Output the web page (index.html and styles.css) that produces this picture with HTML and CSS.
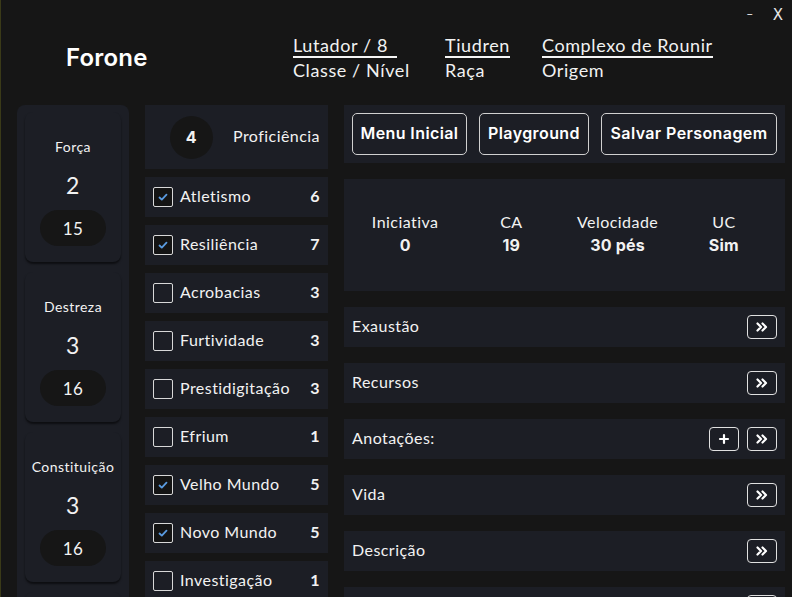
FILE: index.html
```html
<!DOCTYPE html>
<html lang="pt">
<head>
<meta charset="utf-8">
<link rel="stylesheet" href="styles.css">
</head>
<body>
<div class="app">
  <div class="winctl"><span class="min">–</span><span class="close">X</span></div>
  <header class="header">
    <h1 class="title">Forone</h1>
    <div class="info first">
      <div class="info-value">Lutador / 8</div>
      <div class="info-label">Classe / Nível</div>
    </div>
    <div class="info">
      <div class="info-value">Tiudren</div>
      <div class="info-label">Raça</div>
    </div>
    <div class="info">
      <div class="info-value">Complexo de Rounir</div>
      <div class="info-label">Origem</div>
    </div>
  </header>
  <main class="main">
    <section class="attrs">
      <div class="attr"><div class="attr-name">Força</div><div class="attr-mod">2</div><div class="attr-val">15</div></div>
      <div class="attr"><div class="attr-name">Destreza</div><div class="attr-mod">3</div><div class="attr-val">16</div></div>
      <div class="attr"><div class="attr-name">Constituição</div><div class="attr-mod">3</div><div class="attr-val">16</div></div>
      <div class="attr"><div class="attr-name">Inteligência</div><div class="attr-mod">1</div><div class="attr-val">12</div></div>
    </section>
    <section class="skills">
      <div class="prof"><div class="prof-num">4</div><div class="prof-label">Proficiência</div></div>
      <div class="skill"><span class="box checked"><svg viewBox="0 0 20 20" width="20" height="20"><path d="M6.5 10.5 L8.8 12.6 L13.5 7.6" fill="none" stroke="#5a9be0" stroke-width="1.8" stroke-linecap="round" stroke-linejoin="round"/></svg></span><span class="skill-name">Atletismo</span><span class="skill-val">6</span></div>
      <div class="skill"><span class="box checked"><svg viewBox="0 0 20 20" width="20" height="20"><path d="M6.5 10.5 L8.8 12.6 L13.5 7.6" fill="none" stroke="#5a9be0" stroke-width="1.8" stroke-linecap="round" stroke-linejoin="round"/></svg></span><span class="skill-name">Resiliência</span><span class="skill-val">7</span></div>
      <div class="skill"><span class="box"></span><span class="skill-name">Acrobacias</span><span class="skill-val">3</span></div>
      <div class="skill"><span class="box"></span><span class="skill-name">Furtividade</span><span class="skill-val">3</span></div>
      <div class="skill"><span class="box"></span><span class="skill-name">Prestidigitação</span><span class="skill-val">3</span></div>
      <div class="skill"><span class="box"></span><span class="skill-name">Efrium</span><span class="skill-val">1</span></div>
      <div class="skill"><span class="box checked"><svg viewBox="0 0 20 20" width="20" height="20"><path d="M6.5 10.5 L8.8 12.6 L13.5 7.6" fill="none" stroke="#5a9be0" stroke-width="1.8" stroke-linecap="round" stroke-linejoin="round"/></svg></span><span class="skill-name">Velho Mundo</span><span class="skill-val">5</span></div>
      <div class="skill"><span class="box checked"><svg viewBox="0 0 20 20" width="20" height="20"><path d="M6.5 10.5 L8.8 12.6 L13.5 7.6" fill="none" stroke="#5a9be0" stroke-width="1.8" stroke-linecap="round" stroke-linejoin="round"/></svg></span><span class="skill-name">Novo Mundo</span><span class="skill-val">5</span></div>
      <div class="skill"><span class="box"></span><span class="skill-name">Investigação</span><span class="skill-val">1</span></div>
      <div class="skill"><span class="box"></span><span class="skill-name">Natureza</span><span class="skill-val">1</span></div>
    </section>
    <section class="right">
      <div class="toolbar">
        <button class="btn">Menu Inicial</button>
        <button class="btn">Playground</button>
        <button class="btn">Salvar Personagem</button>
      </div>
      <div class="stats">
        <div class="stat"><div class="stat-label">Iniciativa</div><div class="stat-val">0</div></div>
        <div class="stat"><div class="stat-label">CA</div><div class="stat-val">19</div></div>
        <div class="stat"><div class="stat-label">Velocidade</div><div class="stat-val">30 pés</div></div>
        <div class="stat"><div class="stat-label">UC</div><div class="stat-val">Sim</div></div>
      </div>
      <div class="row"><span class="row-title">Exaustão</span><span class="icons"><span class="ibtn"><svg viewBox="0 0 30 24" width="30" height="24"><path d="M10.5 8.5 L14 12 L10.5 15.5 M15.5 8.5 L19 12 L15.5 15.5" fill="none" stroke="#fff" stroke-width="2.2" stroke-linecap="round" stroke-linejoin="round"/></svg></span></span></div>
      <div class="row"><span class="row-title">Recursos</span><span class="icons"><span class="ibtn"><svg viewBox="0 0 30 24" width="30" height="24"><path d="M10.5 8.5 L14 12 L10.5 15.5 M15.5 8.5 L19 12 L15.5 15.5" fill="none" stroke="#fff" stroke-width="2.2" stroke-linecap="round" stroke-linejoin="round"/></svg></span></span></div>
      <div class="row"><span class="row-title">Anotações:</span><span class="icons"><span class="ibtn"><svg viewBox="0 0 30 24" width="30" height="24"><path d="M15 8 V16 M11 12 H19" fill="none" stroke="#fff" stroke-width="2.2" stroke-linecap="round"/></svg></span><span class="ibtn"><svg viewBox="0 0 30 24" width="30" height="24"><path d="M10.5 8.5 L14 12 L10.5 15.5 M15.5 8.5 L19 12 L15.5 15.5" fill="none" stroke="#fff" stroke-width="2.2" stroke-linecap="round" stroke-linejoin="round"/></svg></span></span></div>
      <div class="row"><span class="row-title">Vida</span><span class="icons"><span class="ibtn"><svg viewBox="0 0 30 24" width="30" height="24"><path d="M10.5 8.5 L14 12 L10.5 15.5 M15.5 8.5 L19 12 L15.5 15.5" fill="none" stroke="#fff" stroke-width="2.2" stroke-linecap="round" stroke-linejoin="round"/></svg></span></span></div>
      <div class="row"><span class="row-title">Descrição</span><span class="icons"><span class="ibtn"><svg viewBox="0 0 30 24" width="30" height="24"><path d="M10.5 8.5 L14 12 L10.5 15.5 M15.5 8.5 L19 12 L15.5 15.5" fill="none" stroke="#fff" stroke-width="2.2" stroke-linecap="round" stroke-linejoin="round"/></svg></span></span></div>
      <div class="row"><span class="row-title">Equipamento</span><span class="icons"><span class="ibtn"><svg viewBox="0 0 30 24" width="30" height="24"><path d="M10.5 8.5 L14 12 L10.5 15.5 M15.5 8.5 L19 12 L15.5 15.5" fill="none" stroke="#fff" stroke-width="2.2" stroke-linecap="round" stroke-linejoin="round"/></svg></span></span></div>
    </section>
  </main>
</div>
</body>
</html>
```

FILE: styles.css
```css
* { box-sizing: border-box; }
html, body {
  margin: 0;
  height: 597px;
  overflow: hidden;
  background: #161616;
}
body {
  font-family: "Lato", "Noto Sans", sans-serif;
  color: #f2f2f2;
  letter-spacing: 0.45px;
  border-left: 1px solid #3a3a18;
}
.app {
  position: relative;
  padding: 0 7px 0 16px;
}
.winctl {
  position: absolute;
  top: 4px;
  right: 9px;
  display: flex;
  gap: 20px;
  font-family: "DejaVu Sans", sans-serif;
  letter-spacing: 0;
  color: #e6e6e6;
}
.winctl .min { font-size: 12px; line-height: 20px; }
.winctl .close { font-size: 15px; line-height: 22px; }

.header {
  height: 105px;
  display: flex;
  align-items: flex-start;
  padding-top: 34px;
}
.title {
  margin: 10px 0 0 49px;
  width: 227px;
  font-family: "Inter", sans-serif;
  font-weight: 600;
  font-size: 24px;
  line-height: 28px;
  letter-spacing: 0.2px;
  color: #fff;
}
.info {
  display: flex;
  flex-direction: column;
  margin-right: 32px;
  font-size: 18px;
  letter-spacing: 0.6px;
  white-space: nowrap;
}
.info.first { width: 104px; margin-right: 48px; }
.info-value {
  border-bottom: 2px solid #f5f5f5;
  line-height: 22px;
}
.info-label {
  line-height: 22px;
  padding-top: 1px;
}

.main {
  display: grid;
  grid-template-columns: 112px 183px 441px;
  column-gap: 16px;
  align-items: start;
}

/* attributes */
.attrs {
  background: #1c1e25;
  border-radius: 8px;
  padding: 7px 8px 0;
  display: flex;
  flex-direction: column;
  gap: 10px;
}
.attr {
  height: 150px;
  border-radius: 8px;
  background: #1c1e25;
  box-shadow: 0 2px 2px rgba(0, 0, 0, 0.55);
  display: flex;
  flex-direction: column;
  align-items: center;
  padding-top: 26px;
}
.attr-name {
  font-size: 14px;
  line-height: 18px;
}
.attr-mod {
  font-size: 23px;
  line-height: 28px;
  margin-top: 15px;
}
.attr-val {
  margin-top: 11px;
  width: 66px;
  height: 36px;
  border-radius: 18px;
  background: #161616;
  display: flex;
  align-items: center;
  justify-content: center;
  font-size: 17px;
}

/* skills */
.skills {
  display: flex;
  flex-direction: column;
  gap: 8px;
}
.prof {
  height: 64px;
  background: #1c1e25;
  display: flex;
  align-items: center;
  padding-left: 25px;
  gap: 20px;
}
.prof-num {
  width: 43px;
  height: 43px;
  border-radius: 50%;
  background: #161616;
  display: flex;
  align-items: center;
  justify-content: center;
  font-family: "Inter", sans-serif;
  font-weight: 700;
  font-size: 16px;
}
.prof-label { font-size: 16px; padding-bottom: 3px; }
.skill {
  height: 40px;
  background: #1c1e25;
  display: flex;
  align-items: center;
  padding: 0 8px;
}
.box {
  width: 20px;
  height: 20px;
  border: 1px solid #d8d8d8;
  border-radius: 2px;
  display: flex;
  align-items: center;
  justify-content: center;
  flex: none;
}
.box svg { display: block; margin: -1px; }
.box.checked { background: #141414; }
.skill-name {
  margin-left: 7px;
  font-size: 16px;
  flex: 1;
  padding-bottom: 3px;
}
.skill-val {
  font-weight: 700;
  font-size: 16px;
  padding-bottom: 3px;
}

/* right column */
.right {
  display: flex;
  flex-direction: column;
  gap: 16px;
}
.toolbar {
  height: 58px;
  background: #1c1e25;
  padding: 8px;
  display: grid;
  grid-template-columns: 115px 110px 1fr;
  column-gap: 12px;
}
.btn {
  height: 42px;
  background: transparent;
  border: 1px solid #d0d0d0;
  border-radius: 5px;
  color: #fff;
  font-family: "Inter", sans-serif;
  font-weight: 600;
  font-size: 16px;
  padding: 0 0 2px;
  letter-spacing: 0.4px;
}
.stats {
  height: 112px;
  background: #1c1e25;
  padding: 0 8px;
  display: grid;
  grid-template-columns: repeat(4, 1fr);
  align-items: center;
}
.stat {
  text-align: center;
  padding-bottom: 2px;
}
.stat-label {
  font-size: 16px;
  line-height: 22px;
}
.stat-val {
  font-family: "Inter", sans-serif;
  font-weight: 700;
  font-size: 16px;
  line-height: 24px;
  letter-spacing: 0.2px;
}
.row {
  height: 40px;
  background: #1c1e25;
  display: flex;
  align-items: center;
  justify-content: space-between;
  padding: 0 8px;
}
.row-title { font-size: 16px; padding-bottom: 3px; }
.icons {
  display: flex;
  gap: 8px;
}
.ibtn {
  width: 30px;
  height: 24px;
  border: 1px solid #e0e0e0;
  border-radius: 4px;
  display: block;
}
.ibtn svg { display: block; margin: -1px; }
```
